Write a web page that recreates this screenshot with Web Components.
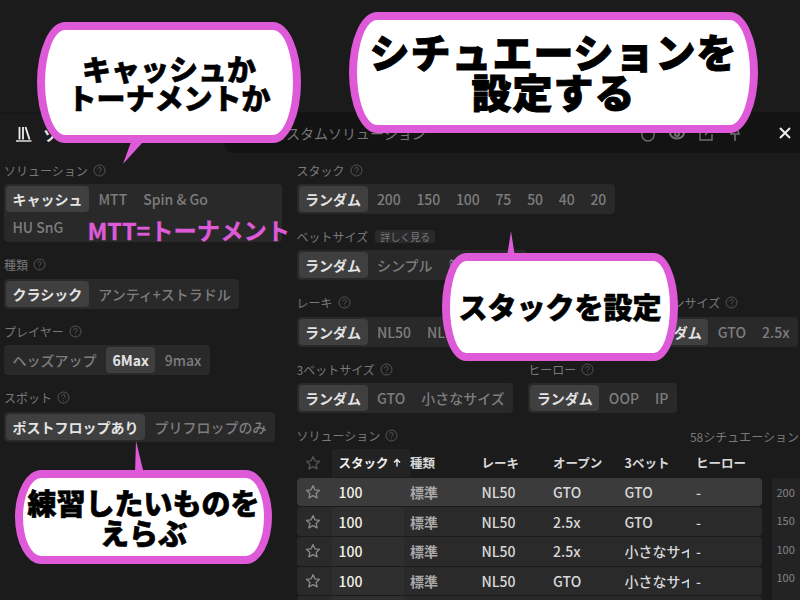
<!DOCTYPE html>
<html lang="ja">
<head>
<meta charset="utf-8">
<title>Solutions</title>
<style>
  html, body { margin: 0; height: 600px; overflow: hidden; background: #1b1b1c; }
  body { font-family: "Noto Sans CJK JP", "Noto Sans", sans-serif; color: #ddd; }
  seg-option.num { letter-spacing: -.15px; }
</style>
<script>
const HELP_ICON = `<svg width="13" height="13" viewBox="0 0 13 13" fill="none" stroke="#565657" stroke-width="1"><circle cx="6.5" cy="6.5" r="5.5"/><path d="M4.8 5.2a1.7 1.7 0 1 1 2.6 1.4c-.6.4-.9.7-.9 1.3M6.5 9.2v.7"/></svg>`;
const STAR = (color) => `<svg width="16" height="16" viewBox="0 0 16 16" fill="none" stroke="${color}" stroke-width="1.3" stroke-linejoin="round"><path d="M8 1.6l1.9 4.2 4.6.5-3.4 3.1 1 4.5L8 11.6l-4.1 2.3 1-4.500-3.400-3.100 4.600-.5z"/></svg>`;

class GroupLabel extends HTMLElement {
  constructor() {
    super();
    this.attachShadow({ mode: 'open' });
  }

  connectedCallback() {
    this.shadowRoot.innerHTML = `
      <style>
        :host { display: flex; align-items: center; gap: 5px; box-sizing: border-box; height: 18px; padding-bottom: 2px; font-size: 12px; color: #79797a; white-space: nowrap; }
        svg { display: block; }
      </style>
      <slot></slot>${HELP_ICON}
    `;
  }
}
customElements.define('group-label', GroupLabel);

class OptionGroup extends HTMLElement {
  constructor() {
    super();
    this.attachShadow({ mode: 'open' });
  }

  connectedCallback() {
    const label = this.getAttribute('label');
    // ベットサイズ has a badge instead of the help icon
    const head = this.hasAttribute('badge')
      ? `<div class="badged">${label}<span class="badge">${this.getAttribute('badge')}</span></div>`
      : `<group-label>${label}</group-label>`;
    this.shadowRoot.innerHTML = `
      <style>
        :host { display: flex; flex-direction: column; align-items: flex-start; }
        .badged { display: flex; align-items: center; gap: 7px; box-sizing: border-box; height: 18px; padding-bottom: 2px; font-size: 12px; color: #79797a; white-space: nowrap; }
        .badge { font-size: 10px; line-height: 13px; padding: 0 5px; border-radius: 3px; background: #2a2a2b; color: #78787a; }
        .seg {
          display: flex;
          flex-wrap: wrap;
          gap: 2px 3px;
          margin-top: 4px;
          padding: 2px;
          border-radius: 4px;
          background: #29292a;
        }
      </style>
      ${head}
      <div class="seg"><slot></slot></div>
    `;
  }
}
customElements.define('option-group', OptionGroup);

class SegOption extends HTMLElement {
  constructor() {
    super();
    this.attachShadow({ mode: 'open' });
  }

  connectedCallback() {
    this.shadowRoot.innerHTML = `
      <style>
        :host {
          display: block;
          height: 26px;
          line-height: 26px;
          padding: 0 6.5px;
          border-radius: 4px;
          font-size: 14px;
          font-weight: 500;
          color: #7d7d7e;
          white-space: nowrap;
        }
        :host([active]) { background: #3f3f40; color: #e4e4e4; font-weight: 700; }
      </style>
      <slot></slot>
    `;
  }
}
customElements.define('seg-option', SegOption);

class AppHeader extends HTMLElement {
  constructor() {
    super();
    this.attachShadow({ mode: 'open' });
  }

  connectedCallback() {
    this.shadowRoot.innerHTML = `
      <style>
        :host { display: flex; height: 41px; margin-top: 112px; }
        .left { width: 225px; display: flex; align-items: center; gap: 11px; padding: 1px 0 0 15px; box-sizing: border-box; border-top: 2px solid #161617; font-size: 15px; font-weight: 700; color: #e6e6e6; }
        .right { flex: 1; display: flex; align-items: center; padding-left: 47px; background: #131314; border-bottom-left-radius: 8px; font-size: 14px; color: #767677; }
        .title { flex: 1; }
        .icons { display: flex; align-items: center; gap: 13px; margin-right: 7px; color: #6f6f70; }
        svg { display: block; }
      </style>
      <div class="left">
        <svg width="17" height="16" viewBox="0 0 17 16" fill="none" stroke="#efefef" stroke-width="1.8"><path d="M4.500 1v12.500M8 1v12.500M10.500 1l4 12.500"/><path d="M1 15h15.500" stroke-width="1.400"/></svg>
        <span>ソリューション</span>
      </div>
      <div class="right">
        <span class="title">カスタムソリューション</span>
        <div class="icons">
          <svg width="16" height="18" viewBox="0 0 16 18" fill="none" stroke="currentColor" stroke-width="1.400"><path d="M2 3h12v8a6 6 0 0 1-12 0z"/></svg>
          <svg width="16" height="18" viewBox="0 0 16 18" fill="none" stroke="currentColor" stroke-width="2"><path d="M1 10c3-6 11-6 14 0-3 6-11 6-14 0z"/><circle cx="8" cy="10" r="2"/></svg>
          <svg width="16" height="18" viewBox="0 0 16 18" fill="none" stroke="currentColor" stroke-width="1.400"><path d="M8 4H2v12h12v-6M7 11l7-7"/></svg>
          <svg width="16" height="18" viewBox="0 0 16 18" fill="none" stroke="currentColor" stroke-width="1.600"><path d="M4 10l2-6h4l2 6zM8 10v7"/></svg>
          <svg width="16" height="16" viewBox="0 0 16 16" style="margin-left:21px" fill="none" stroke="#efefef" stroke-width="2"><path d="M3 3l10 10M13 3L3 13"/></svg>
        </div>
      </div>
    `;
  }
}
customElements.define('app-header', AppHeader);

class SolutionTable extends HTMLElement {
  constructor() {
    super();
    this.attachShadow({ mode: 'open' });
  }

  connectedCallback() {
    const rows = [
      ['100', '標準', 'NL50', 'GTO', 'GTO', '-'],
      ['100', '標準', 'NL50', '2.5x', 'GTO', '-'],
      ['100', '標準', 'NL50', '2.5x', '小さなサイズ', '-'],
      ['100', '標準', 'NL50', 'GTO', '小さなサイズ', '-'],
      ['100', '標準', 'NL50', 'GTO', 'GTO', '-'],
    ];
    const side = ['200', '150', '100', '100'];
    const body = rows.map((r, i) => `
      <div class="row ${i === 0 ? 'on' : ''}">
        <span class="star">${STAR('#8a8a8b')}</span>
        <span class="stack">${r[0]}</span>
        <span class="kind">${r[1]}</span>
        ${r.slice(2).map((c) => `<span>${c}</span>`).join('')}
      </div>`).join('');
    this.shadowRoot.innerHTML = `
      <style>
        :host { display: block; }
        .top { display: flex; justify-content: space-between; height: 18px; font-size: 12px; color: #79797a; white-space: nowrap; margin-right: 1px; }
        .head, .row { display: grid; grid-template-columns: 35px repeat(6, 64.5px); column-gap: 7px; align-items: center; }
        .head { height: 28px; margin-top: 3px; margin-bottom: 1px; width: 465px; font-size: 12.5px; font-weight: 700; color: #d8d8d8; }
        .head .sorted { align-self: stretch; display: flex; align-items: center; gap: 4px; margin-left: -7px; margin-right: -7px; padding-left: 7px; background: #232324; border-radius: 4px 4px 0 0; color: #f0f0f0; }
        .star { display: flex; justify-content: center; padding-right: 3px; }
        .wrap { display: flex; gap: 10px; }
        .rows { width: 465px; display: flex; flex-direction: column; gap: 1px; }
        /* the stack column is a shade lighter than the rest of the row */
        .row { height: 28.7px; border-radius: 4px; background: linear-gradient(90deg, #2a2a2b 35px, #2f2f30 35px, #2f2f30 107px, #2a2a2b 107px); font-size: 14px; font-weight: 500; color: #d8d8d8; }
        .row.on { background: #3b3b3c; }
        .row span { overflow: hidden; white-space: nowrap; }
        .row .star { overflow: visible; }
        .stack { color: #f1f1e4; }
        .kind { color: #a9a9aa; font-weight: 700; }
        .side { flex: 1; display: flex; flex-direction: column; padding-left: 5px; background: #232324; border-radius: 4px 0 0 0; font-size: 11px; color: #858586; }
        .side span { height: 28.6px; line-height: 28px; }
      </style>
      <div class="top"><group-label>ソリューション</group-label><span>58シチュエーション</span></div>
      <div class="head">
        <span class="star">${STAR('#555556')}</span>
        <span class="sorted">スタック<svg width="8" height="9" viewBox="0 0 8 9" fill="none" stroke="#e8e8e8" stroke-width="1.500"><path d="M4 8.500V1.500M1 4.500l3-3 3 3"/></svg></span>
        <span>種類</span><span>レーキ</span><span>オープン</span><span>3ベット</span><span>ヒーロー</span>
      </div>
      <div class="wrap">
        <div class="rows">${body}</div>
        <div class="side">${side.map((n) => `<span>${n}</span>`).join('')}</div>
      </div>
    `;
  }
}
customElements.define('solution-table', SolutionTable);

// Overlay callout: the box and the optional tail points are given by the page
class SpeechBubble extends HTMLElement {
  constructor() {
    super();
    this.attachShadow({ mode: 'open' });
  }

  connectedCallback() {
    const tail = this.getAttribute('tail');
    const tailSvg = tail ? `<svg width="1" height="1"><polygon points="${tail}" fill="#de5ad8"/></svg>` : '';
    this.shadowRoot.innerHTML = `
      <style>
        :host { position: absolute; display: block; box-sizing: border-box; }
        .box {
          box-sizing: border-box;
          width: 100%;
          height: 100%;
          display: flex;
          align-items: center;
          justify-content: center;
          text-align: center;
          border: 8px solid #de5ad8;
          border-radius: var(--rx, 28px) / 50%;
          background: #fff;
          color: #000;
          font-weight: 900;
          white-space: nowrap;
          -webkit-text-stroke: var(--stroke, .6px) #000;
        }
        .box div { position: relative; top: var(--nudge, 0); }
        svg { position: absolute; left: 0; top: 0; overflow: visible; }
      </style>
      ${tailSvg}
      <div class="box"><div><slot></slot></div></div>
    `;
  }
}
customElements.define('speech-bubble', SpeechBubble);

class OverlayNote extends HTMLElement {
  constructor() {
    super();
    this.attachShadow({ mode: 'open' });
  }

  connectedCallback() {
    this.shadowRoot.innerHTML = `
      <style>
        :host { position: absolute; left: 87.5px; top: 213px; font-size: 23.3px; line-height: 34px; font-weight: 700; color: #de5ad8; white-space: nowrap; -webkit-text-stroke: .3px #de5ad8; }
      </style>
      <slot></slot>
    `;
  }
}
customElements.define('overlay-note', OverlayNote);

class AppPage extends HTMLElement {
  constructor() {
    super();
    this.attachShadow({ mode: 'open' });
  }

  connectedCallback() {
    this.shadowRoot.innerHTML = `
      <style>
        :host { display: block; position: relative; width: 800px; height: 600px; overflow: hidden; }
        .cols { display: flex; margin-top: 9px; }
        .left { width: 292.5px; padding-left: 4px; }
        .right { flex: 1; min-width: 0; }
      </style>
      <app-header></app-header>
      <div class="cols">
        <div class="left"><slot name="left"></slot></div>
        <div class="right"><slot name="right"></slot></div>
      </div>
      <slot name="over"></slot>
    `;
  }
}
customElements.define('app-page', AppPage);

class OptionStack extends HTMLElement {
  constructor() {
    super();
    this.attachShadow({ mode: 'open' });
  }

  connectedCallback() {
    this.shadowRoot.innerHTML = `
      <style>
        :host { display: flex; flex-direction: column; gap: 14.5px; }
      </style>
      <slot></slot>
    `;
  }
}
customElements.define('option-stack', OptionStack);

class OptionRow extends HTMLElement {
  constructor() {
    super();
    this.attachShadow({ mode: 'open' });
  }

  connectedCallback() {
    this.shadowRoot.innerHTML = `
      <style>
        :host { display: flex; justify-content: var(--justify, flex-start); gap: 15px; }
      </style>
      <slot></slot>
    `;
  }
}
customElements.define('option-row', OptionRow);
</script>
</head>
<body>
<app-page>
  <option-stack slot="left">
    <option-group label="ソリューション" style="width:278px">
      <seg-option active>キャッシュ</seg-option><seg-option>MTT</seg-option><seg-option>Spin &amp; Go</seg-option><seg-option>HU SnG</seg-option>
    </option-group>
    <option-group label="種類">
      <seg-option active>クラシック</seg-option><seg-option>アンティ+ストラドル</seg-option>
    </option-group>
    <option-group label="プレイヤー">
      <seg-option>ヘッズアップ</seg-option><seg-option active>6Max</seg-option><seg-option>9max</seg-option>
    </option-group>
    <option-group label="スポット">
      <seg-option active>ポストフロップあり</seg-option><seg-option>プリフロップのみ</seg-option>
    </option-group>
  </option-stack>
  <option-stack slot="right">
    <option-group label="スタック">
      <seg-option active>ランダム</seg-option><seg-option class="num">200</seg-option><seg-option class="num">150</seg-option><seg-option class="num">100</seg-option><seg-option class="num">75</seg-option><seg-option class="num">50</seg-option><seg-option class="num">40</seg-option><seg-option class="num">20</seg-option>
    </option-group>
    <option-group label="ベットサイズ" badge="詳しく見る" style="margin-top:-.5px">
      <seg-option active>ランダム</seg-option><seg-option>シンプル</seg-option><seg-option>節約サイズ</seg-option>
    </option-group>
    <option-row style="--justify:space-between;margin-right:2px">
      <option-group label="レーキ">
        <seg-option active>ランダム</seg-option><seg-option>NL50</seg-option><seg-option>NL100</seg-option><seg-option>NL200</seg-option><seg-option>NL500</seg-option>
      </option-group>
      <option-group label="オープンサイズ">
        <seg-option active>ランダム</seg-option><seg-option>GTO</seg-option><seg-option>2.5x</seg-option>
      </option-group>
    </option-row>
    <option-row>
      <option-group label="3ベットサイズ">
        <seg-option active>ランダム</seg-option><seg-option>GTO</seg-option><seg-option>小さなサイズ</seg-option>
      </option-group>
      <option-group label="ヒーロー">
        <seg-option active>ランダム</seg-option><seg-option>OOP</seg-option><seg-option>IP</seg-option>
      </option-group>
    </option-row>
    <solution-table></solution-table>
  </option-stack>
  <overlay-note slot="over">MTT=トーナメント</overlay-note>
  <speech-bubble slot="over" tail="94,120 106,120 86,142" style="left:37px;top:22px;width:264px;height:121px;font-size:29px;line-height:29px">キャッシュか<br>トーナメントか</speech-bubble>
  <speech-bubble slot="over" style="left:349px;top:12px;width:409px;height:121px;font-size:40px;line-height:40px;letter-spacing:1px;--stroke:1px;--nudge:-2px">シチュエーションを<br>設定する</speech-bubble>
  <speech-bubble slot="over" tail="65,4 73,4 69,-22" style="left:442px;top:253px;width:236px;height:108px;font-size:29px;line-height:28px;--rx:24px;--nudge:-1px">スタックを設定</speech-bubble>
  <speech-bubble slot="over" tail="120,4 129,4 121,-29" style="left:15px;top:470px;width:257px;height:94px;font-size:29px;line-height:30px;--rx:26px">練習したいものを<br>えらぶ</speech-bubble>
</app-page>
</body>
</html>
